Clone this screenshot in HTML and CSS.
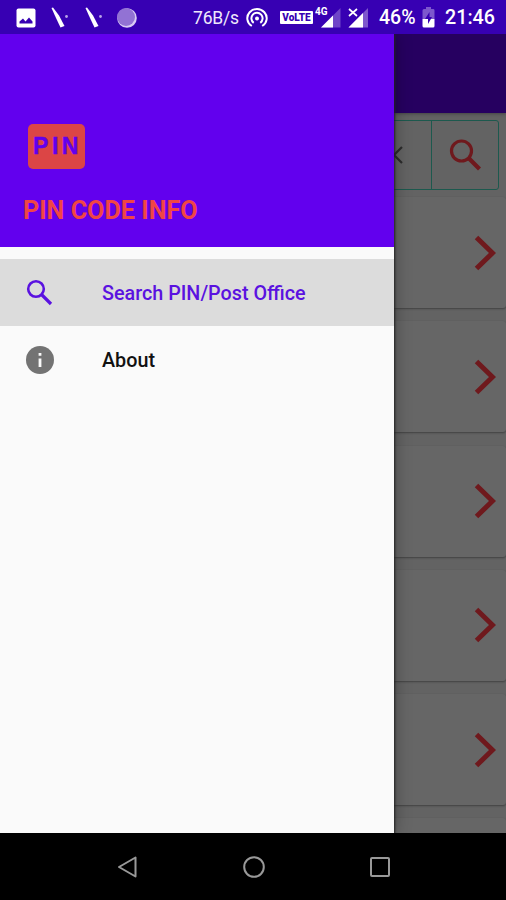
FILE: index.html
```html
<!DOCTYPE html>
<html lang="en">
<head>
<meta charset="utf-8">
<title>PIN Code Info</title>
<link rel="stylesheet" href="styles.css">
</head>
<body>
<div class="phone">
  <header class="status">
    <svg class="st-image" width="20" height="20" viewBox="0 0 20 20"><rect x=".5" y=".5" width="19" height="19" rx="2" fill="#fff"/><path d="M3.500 15.500V13.500L7 10.500l2.500 3L13 9.500l3.500 4V15.500z" fill="#3700b3"/></svg>
    <svg class="st-slash" width="18" height="22" viewBox="0 0 18 22"><path d="M.5 1 2 .5 8 8.500 13.500 19 9.500 20.500 5 11Z" fill="#fff"/><circle cx="15.500" cy="9.500" r="1.400" fill="#b9a2e8"/></svg>
    <svg class="st-slash" width="18" height="22" viewBox="0 0 18 22"><path d="M.5 1 2 .5 8 8.500 13.500 19 9.500 20.500 5 11Z" fill="#fff"/><circle cx="15.500" cy="9.500" r="1.400" fill="#b9a2e8"/></svg>
    <svg class="st-moon" width="20" height="20" viewBox="0 0 20 20"><circle cx="10" cy="10" r="9.800" fill="#d9cbf5"/><circle cx="9" cy="9" r="9" fill="#9272d4"/></svg>
    <span class="speed">76B/s</span>
    <svg class="st-hotspot" width="22" height="20" viewBox="0 0 22 20" fill="none" stroke="#fff" stroke-width="2"><path d="M5.800 18A9.700 9.200 0 1 1 16.200 18"/><path d="M7.700 14.900A5.600 5.600 0 1 1 14.300 14.900"/><circle cx="11" cy="10.600" r="2" fill="#fff" stroke="none"/></svg>
    <span class="volte">VoLTE</span>
    <span class="net">4G</span>
    <svg class="st-signal" width="20" height="20" viewBox="0 0 20 20"><path d="M19.500 0V19.500H0Z" fill="#6f45c8"/><path d="M12 7.500V19.500H0Z" fill="#fff"/></svg>
    <svg class="st-nosignal" width="21" height="20" viewBox="0 0 21 20"><path d="M20 0V19.500H.5Z" fill="#7d57cd"/><path d="M15 5V19.500H.5Z" fill="#fff"/><path d="M1 1 9 8M9 1 1 8" stroke="#fff" stroke-width="1.700"/></svg>
    <span class="percent">46%</span>
    <svg class="st-battery" width="13" height="21" viewBox="0 0 13 21"><path d="M4 0H9V2H11.500Q12.500 2 12.500 3.500V12H.5V3.500Q.5 2 2 2H4Z" fill="#7d57cd"/><path d="M.5 12H12.500V19Q12.500 20.500 11 20.500H2Q.5 20.500 .5 19Z" fill="#fff"/><path d="M7.500 5 3 12H6V17L10 10H7.500Z" fill="#3700b3"/></svg>
    <time class="clock">21:46</time>
  </header>
  <main class="screen">
    <section class="page">
      <div class="appbar"></div>
      <div class="searchbar">
        <div class="field"><svg width="18" height="18" viewBox="0 0 18 18"><path d="M1 1 17 17M17 1 1 17" stroke="#2c2c2c" stroke-width="2.200"/></svg></div>
        <div class="go"><svg width="32" height="32" viewBox="0 0 32 32" fill="none" stroke="#6f191d"><circle cx="12.500" cy="12" r="10" stroke-width="3.200"/><path d="M20 19.500 30.500 30" stroke-width="4.200"/></svg></div>
      </div>
      <div class="cards">
        <div class="card"><svg class="chev" width="22" height="36" viewBox="0 0 22 36"><path d="M2.500 2.500 18.500 18 2.500 33.500"/></svg></div>
        <div class="card"><svg class="chev" width="22" height="36" viewBox="0 0 22 36"><path d="M2.500 2.500 18.500 18 2.500 33.500"/></svg></div>
        <div class="card"><svg class="chev" width="22" height="36" viewBox="0 0 22 36"><path d="M2.500 2.500 18.500 18 2.500 33.500"/></svg></div>
        <div class="card"><svg class="chev" width="22" height="36" viewBox="0 0 22 36"><path d="M2.500 2.500 18.500 18 2.500 33.500"/></svg></div>
        <div class="card"><svg class="chev" width="22" height="36" viewBox="0 0 22 36"><path d="M2.500 2.500 18.500 18 2.500 33.500"/></svg></div>
        <div class="card"></div>
      </div>
    </section>
    <aside class="drawer">
      <div class="hero">
        <div class="logo"><span>PIN</span></div>
        <h1>PIN CODE INFO</h1>
      </div>
      <nav class="menu">
        <a class="item active"><svg width="30" height="30" viewBox="0 0 30 30" fill="none" stroke="#5a12e0"><circle cx="11" cy="11" r="7.800" stroke-width="2.600"/><path d="M16.500 16.500 26 26" stroke-width="3.200"/></svg><span>Search PIN/Post Office</span></a>
        <a class="item"><svg width="30" height="30" viewBox="0 0 30 30"><circle cx="15" cy="15" r="14" fill="#737373"/><path d="M13.600 8H16.400V10.800H13.600ZM13.600 13.400H16.400V22H13.600Z" fill="#fafafa"/></svg><span>About</span></a>
      </nav>
    </aside>
  </main>
  <footer class="navbar">
    <svg width="22" height="24" viewBox="0 0 22 24"><path d="M2 12 18.500 2.500V21.500Z"/></svg>
    <svg width="24" height="24" viewBox="0 0 24 24"><circle cx="12" cy="12" r="9.800"/></svg>
    <svg width="22" height="22" viewBox="0 0 22 22"><rect x="2" y="2" width="18" height="18" rx="1"/></svg>
  </footer>
</div>
</body>
</html>
```
FILE: styles.css
```css
* { box-sizing: border-box; }
body { margin: 0; font-family: Roboto, sans-serif; }
svg { display: block; flex: none; }
.phone { width: 506px; height: 900px; display: flex; flex-direction: column; overflow: hidden; background: #000; }

.status { height: 34px; flex: none; display: flex; align-items: center; background: #3700b3; color: #fff; padding: 1px 0 0 16px; white-space: nowrap; }
.status > * { flex: none; }
.st-slash { margin-left: 15px; }
.st-slash + .st-slash { margin-left: 16px; }
.st-moon { margin-left: 14px; }
.speed { width: 46px; margin-left: 56px; font-size: 17.500px; letter-spacing: -0.200px; line-height: 34px; color: #efe9fc; }
.st-hotspot { margin-left: 7px; }
.volte { width: 33px; height: 13px; margin-left: 12px; background: #fff; color: #3700b3; font-size: 10px; font-weight: 900; line-height: 13px; text-align: center; border-radius: 1px; }
.net { width: 14px; margin: -11px 0 0 2px; font-size: 10px; line-height: 12px; font-weight: 700; }
.st-signal { margin-left: -8px; }
.st-nosignal { margin-left: 7px; }
.percent { width: 37px; margin-left: 10px; font-size: 19.500px; font-weight: 500; }
.st-battery { margin-left: 6px; }
.clock { margin-left: 10px; font-size: 19.700px; font-weight: 500; }

.screen { height: 799px; flex: none; position: relative; overflow: hidden; }
.page { height: 100%; background: #636363; }
.appbar { height: 79px; background: #260060; box-shadow: 0 1px 3px #444; }
.searchbar { display: flex; height: 70px; margin: 7px 7px 0; border: 1.500px solid #1d594e; border-radius: 3px; }
.field { flex: 1; display: flex; align-items: center; justify-content: flex-end; padding-right: 28px; border-right: 1.500px solid #1d594e; }
.go { width: 66px; display: flex; align-items: center; justify-content: center; }
.cards { display: flex; flex-direction: column; gap: 13.300px; padding-top: 7px; }
.card { height: 111px; flex: none; display: flex; align-items: center; justify-content: flex-end; padding-right: 10px; background: #666; border-radius: 3px; box-shadow: 0 1px 2px #404040; }
.chev { fill: none; stroke: #6f191d; stroke-width: 5; }

.drawer { position: absolute; inset: 0 auto 0 0; width: 394px; background: #fafafa; box-shadow: 0 0 2px 1px #222, 0 0 16px rgba(0, 0, 0, .35); }
.hero { height: 213px; background: #6200ee; padding: 90px 0 0 23px; }
.logo { width: 57px; height: 45px; margin-left: 5px; border-radius: 5px; background: #dc4545; display: flex; align-items: center; justify-content: center; font: 700 23px/45px "Liberation Sans", sans-serif; letter-spacing: 3.500px; color: #6200ee; padding-left: 2px; -webkit-text-stroke: .4px #6200ee; }
h1 { margin: 26px 0 0; font-size: 25.200px; line-height: 32px; font-weight: 700; color: #f04545; white-space: nowrap; }
.menu { padding-top: 12px; }
.item { height: 67px; display: flex; align-items: center; padding-left: 25px; font-size: 19.750px; font-weight: 500; color: #111; }
.item span { margin-left: 47px; padding-top: 1px; }
.active { background: #dcdcdc; color: #5a12e0; }

.navbar { height: 67px; display: flex; align-items: center; justify-content: space-between; padding: 0 115px 0 117px; background: #000; }
.navbar svg { fill: none; stroke: #999; stroke-width: 2; stroke-linejoin: round; }
```
